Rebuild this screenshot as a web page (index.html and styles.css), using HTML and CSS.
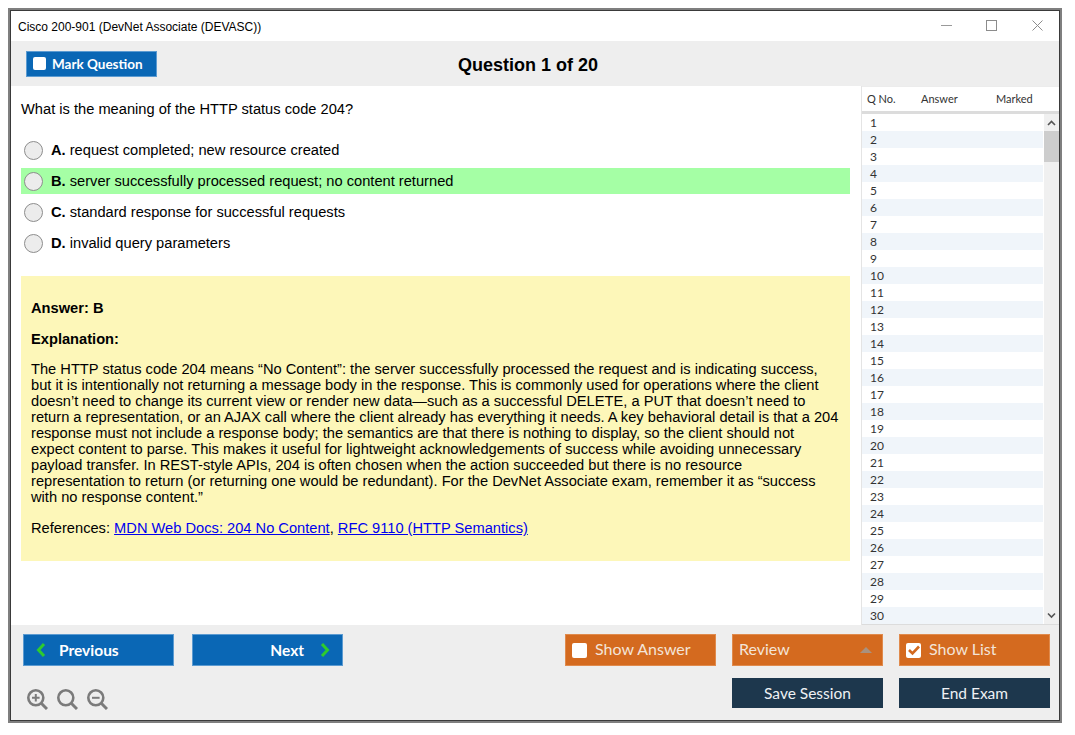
FILE: index.html
```html
<!DOCTYPE html>
<html lang="en">
<head>
<meta charset="utf-8">
<title>Cisco 200-901</title>
<link rel="stylesheet" href="styles.css">
</head>
<body>
<div class="window">
  <header class="titlebar">
    <span class="title">Cisco 200-901 (DevNet Associate (DEVASC))</span>
    <div class="winctl">
      <svg width="11" height="11" viewBox="0 0 11 11"><path d="M0 5.5H11" stroke="#9a9a9a" fill="none"/></svg>
      <svg width="11" height="11" viewBox="0 0 11 11"><rect x="0.5" y="0.5" width="10" height="10" stroke="#8c8c8c" fill="none"/></svg>
      <svg class="close" width="11" height="11" viewBox="0 0 11 11"><path d="M0.5 0.5L10.5 10.5M10.5 0.5L0.5 10.5" stroke="#8c8c8c" fill="none"/></svg>
    </div>
  </header>
  <div class="toolbar">
    <button class="btn blue mark"><span class="check"></span>Mark Question</button>
    <h1 class="qcount">Question 1 of 20</h1>
  </div>
  <main class="main">
    <section class="content">
      <p class="question">What is the meaning of the HTTP status code 204?</p>
      <div class="options">
        <div class="option"><span class="radio"></span><span><b>A.</b> request completed; new resource created</span></div>
        <div class="option correct"><span class="radio"></span><span><b>B.</b> server successfully processed request; no content returned</span></div>
        <div class="option"><span class="radio"></span><span><b>C.</b> standard response for successful requests</span></div>
        <div class="option"><span class="radio"></span><span><b>D.</b> invalid query parameters</span></div>
      </div>
      <div class="answer">
        <p class="ans-h">Answer: B</p>
        <p class="ans-h exp">Explanation:</p>
        <p class="exp-text">The HTTP status code 204 means “No Content”: the server successfully processed the request and is indicating success,<br>but it is intentionally not returning a message body in the response. This is commonly used for operations where the client<br>doesn’t need to change its current view or render new data—such as a successful DELETE, a PUT that doesn’t need to<br>return a representation, or an AJAX call where the client already has everything it needs. A key behavioral detail is that a 204<br>response must not include a response body; the semantics are that there is nothing to display, so the client should not<br>expect content to parse. This makes it useful for lightweight acknowledgements of success while avoiding unnecessary<br>payload transfer. In REST-style APIs, 204 is often chosen when the action succeeded but there is no resource<br>representation to return (or returning one would be redundant). For the DevNet Associate exam, remember it as “success<br>with no response content.”</p>
        <p class="refs">References: <a href="#">MDN Web Docs: 204 No Content</a>, <a href="#">RFC 9110 (HTTP Semantics)</a></p>
      </div>
    </section>
    <aside class="list">
      <div class="list-head"><span>Q No.</span><span>Answer</span><span>Marked</span></div>
      <div class="list-body">
        <div class="rows">
          <div>1</div><div>2</div><div>3</div><div>4</div><div>5</div><div>6</div>
          <div>7</div><div>8</div><div>9</div><div>10</div><div>11</div><div>12</div>
          <div>13</div><div>14</div><div>15</div><div>16</div><div>17</div><div>18</div>
          <div>19</div><div>20</div><div>21</div><div>22</div><div>23</div><div>24</div>
          <div>25</div><div>26</div><div>27</div><div>28</div><div>29</div><div>30</div>
        </div>
        <div class="scrollbar">
          <svg class="arrow" width="15" height="17" viewBox="0 0 15 17"><path d="M4 11L7.5 7.5L11 11" stroke="#555" stroke-width="1.6" fill="none"/></svg>
          <div class="thumb"></div>
          <svg class="arrow down" width="15" height="17" viewBox="0 0 15 17"><path d="M4 6.5L7.5 10L11 6.5" stroke="#555" stroke-width="1.6" fill="none"/></svg>
        </div>
      </div>
    </aside>
  </main>
  <footer class="footer">
    <div class="foot-row">
      <button class="btn blue nav prev">
        <svg width="12" height="16" viewBox="0 0 12 16"><path d="M9 2L3.5 8L9 14" stroke="#2ecb2e" stroke-width="3" fill="none"/></svg>
        Previous
      </button>
      <button class="btn blue nav next">
        Next
        <svg width="12" height="16" viewBox="0 0 12 16"><path d="M3 2L8.5 8L3 14" stroke="#2ecb2e" stroke-width="3" fill="none"/></svg>
      </button>
      <button class="btn orange show-answer"><span class="check big"></span>Show Answer</button>
      <button class="btn orange review">Review<svg width="12" height="6" viewBox="0 0 12 6"><path d="M0 6L6 0L12 6Z" fill="#a9917f"/></svg></button>
      <button class="btn orange show-list"><span class="check big"><svg width="14" height="12" viewBox="0 0 14 12"><path d="M2 6L5.5 9.5L12 2.5" stroke="#d2691f" stroke-width="2.6" fill="none"/></svg></span>Show List</button>
    </div>
    <div class="foot-row lower">
      <div class="zooms">
        <svg width="21" height="21" viewBox="0 0 21 21"><circle cx="8.8" cy="8.8" r="7.5" stroke="#7b7b7b" stroke-width="2.6" fill="none"/><path d="M14 14L20 20" stroke="#7b7b7b" stroke-width="3"/><path d="M5 8.8H12.6M8.8 5V12.6" stroke="#7b7b7b" stroke-width="2"/></svg>
        <svg width="21" height="21" viewBox="0 0 21 21"><circle cx="8.8" cy="8.8" r="7.5" stroke="#7b7b7b" stroke-width="2.6" fill="none"/><path d="M14 14L20 20" stroke="#7b7b7b" stroke-width="3"/></svg>
        <svg width="21" height="21" viewBox="0 0 21 21"><circle cx="8.8" cy="8.8" r="7.5" stroke="#7b7b7b" stroke-width="2.6" fill="none"/><path d="M14 14L20 20" stroke="#7b7b7b" stroke-width="3"/><path d="M5 8.8H12.6" stroke="#7b7b7b" stroke-width="2"/></svg>
      </div>
      <button class="btn navy save">Save Session</button>
      <button class="btn navy end">End Exam</button>
    </div>
  </footer>
</div>
</body>
</html>
```
FILE: styles.css
```css
* { box-sizing: border-box; }
html, body { margin: 0; padding: 0; background: #fff; }
body { padding: 8px 13px 12px 8px; font-family: "Liberation Sans", Arial, sans-serif; }
.window {
  width: 1054px; height: 715px;
  border: 3px solid #7f7f7f;
  outline: 1px solid #3a3a3a; outline-offset: -3px;
  display: flex; flex-direction: column;
  background: #fff; color: #000;
}
.titlebar { height: 30px; flex: none; display: flex; align-items: center; justify-content: space-between; padding: 2px 16px 0 7px; }
.title { font-size: 12px; }
.winctl { display: flex; gap: 34px; margin-top: -3px; }
.close { margin-left: 1px; }
.toolbar { height: 45px; flex: none; background: #eeeeee; display: flex; align-items: center; padding: 0 15px; }
.btn { border: 0; font-family: Lato, "Open Sans", sans-serif; color: #fff; display: flex; align-items: center; cursor: pointer; padding: 0; flex: none; }
.blue { background: #0a67b5; border: 1px solid #5c9bd1; }
.orange { background: #d46a1f; border: 1px solid #e08a4c; color: #f3e4d8; font-size: 16px; width: 151px; height: 32px; padding: 0 0 3px 6px; }
.orange > .check { margin-top: 3px; }
.orange > svg { margin-top: 3px; }
.navy { background: #1d374d; color: #eef1f4; font-size: 15.5px; justify-content: center; height: 30px; width: 151px; }
.mark { width: 131px; height: 26px; font-size: 13.5px; font-weight: 700; padding-left: 6px; }
.check { width: 13px; height: 13px; background: #fff; border-radius: 2px; margin-right: 6px; flex: none; display: flex; align-items: center; justify-content: center; }
.check.big { width: 15px; height: 15px; margin-right: 8px; }
.qcount { margin: 4px 0 0 301px; font-size: 18px; font-weight: 700; }
.main { flex: 1; min-height: 0; display: flex; }
.content { width: 850px; flex: none; padding: 15px 11px 0 10px; }
.question { margin: 0; font-size: 14.67px; line-height: 17px; }
.options { margin-top: 19px; display: flex; flex-direction: column; gap: 5px; }
.option { height: 26px; display: flex; align-items: center; gap: 8px; padding-left: 3px; font-size: 14.67px; }
.option.correct { background: #a5ffa5; }
.radio { width: 19px; height: 19px; border-radius: 50%; background: #ececec; border: 1px solid #8d8d8d; flex: none; }
.answer { margin-top: 20px; height: 285px; background: #fdf7b9; padding: 22px 10px 0 10px; font-size: 14.67px; }
.answer p { margin: 0; }
.ans-h { font-weight: 700; line-height: 21px; }
.answer .exp { margin-top: 10px; }
.answer .exp-text { margin-top: 11px; line-height: 16px; }
.answer .refs { margin-top: 15px; line-height: 17px; }
.refs a { color: #0000ee; }
.list { flex: 1; display: flex; flex-direction: column; font-family: Lato, "Open Sans", sans-serif; border-left: 1px solid #e4e4e4; }
.list-head { height: 28px; flex: none; display: grid; grid-template-columns: 54px 75px 1fr; align-items: center; padding: 0 0 2px 5px; font-size: 11px; color: #333; background: #fff; border-bottom: 3px solid #dcdcdc; border-top: 1px solid #ececec; }
.list-body { flex: 1; min-height: 0; display: flex; overflow: hidden; border-bottom: 1px solid #dcdcdc; }
.rows { flex: 1; min-width: 0; border-right: 1px solid #fff; }
.rows div { height: 17.03px; padding-left: 8px; font-size: 12px; line-height: 17px; color: #333; }
.rows div:nth-child(even) { background: #f0f5fa; }
.scrollbar { width: 15px; flex: none; background: #f0f0f0; display: flex; flex-direction: column; }
.scrollbar .arrow { flex: none; }
.thumb { height: 31px; background: #cdcdcd; }
.arrow.down { margin-top: auto; }
.footer { height: 95px; flex: none; background: #eeeeee; display: flex; flex-direction: column; gap: 12px; padding: 9px 9px 0 12px; }
.foot-row { display: flex; }
.nav { font-size: 15.5px; font-weight: 700; height: 32px; width: 151px; }
.prev { padding-left: 11px; gap: 12px; }
.next { justify-content: flex-end; padding-right: 11px; margin-left: 18px; gap: 15px; }
.show-answer { width: 151px; margin-left: 222px; }
.review { margin-left: 16px; justify-content: space-between; padding-right: 10px; }
.show-list { margin-left: 16px; }
.zooms { display: flex; gap: 9px; padding: 11px 0 0 4px; }
.save { margin-left: auto; }
.end { margin-left: 16px; }
```
